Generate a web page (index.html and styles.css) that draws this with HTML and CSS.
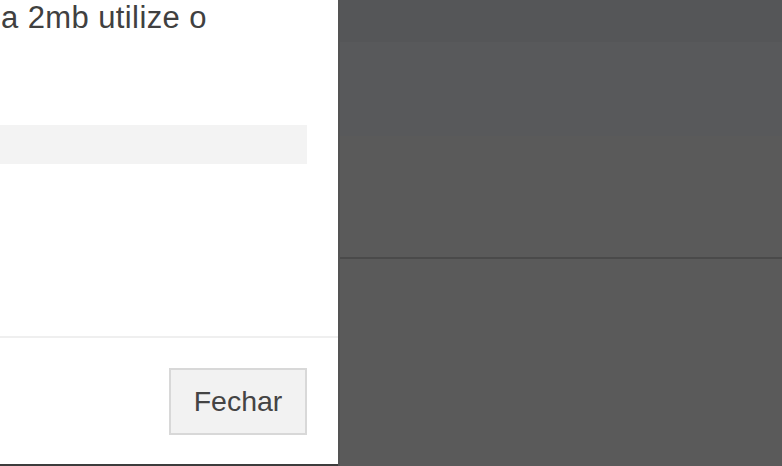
FILE: index.html
```html
<!DOCTYPE html>
<html>
<head>
<meta charset="utf-8">
<link rel="stylesheet" href="styles.css">
</head>
<body>
<div class="page">
  <div class="modal">
    <div class="modal-body">
      <p class="msg">a 2mb utilize o</p>
      <div class="field"></div>
    </div>
    <div class="modal-footer">
      <button class="btn">Fechar</button>
    </div>
  </div>
  <div class="overlay">
    <div class="band band-top"></div>
    <div class="band band-mid"></div>
    <div class="band band-low"></div>
    <div class="band band-bottom"></div>
  </div>
</div>
</body>
</html>
```

FILE: styles.css
```css
html, body {
  margin: 0;
  padding: 0;
  height: 100%;
  overflow: hidden;
}
body {
  font-family: "Liberation Sans", Arial, sans-serif;
}
.page {
  display: flex;
  height: 466px;
}
.modal {
  width: 338px;
  flex: none;
  height: 464px;
  background: #fff;
  border-bottom: 2px solid #3c3c3c;
  display: flex;
  flex-direction: column;
}
.modal-body {
  flex: 1;
  padding: 0 31px 0 0;
}
.msg {
  margin: 0;
  padding: 0 0 0 1px;
  font-size: 31px;
  letter-spacing: 0.4px;
  line-height: 36px;
  color: #404040;
}
.field {
  margin-top: 89px;
  height: 39px;
  background: #f3f3f3;
}
.modal-footer {
  height: 128px;
  border-top: 2px solid #efefef;
  display: flex;
  justify-content: flex-end;
  align-items: flex-start;
  padding: 30px 31px 0 0;
  box-sizing: border-box;
}
.btn {
  width: 138px;
  height: 67px;
  background: #f2f2f2;
  border: 2px solid #d8d8d8;
  font-family: "Liberation Sans", Arial, sans-serif;
  font-size: 28.5px;
  color: #444;
  padding: 0;
}
.overlay {
  flex: 1;
  display: flex;
  flex-direction: column;
  background: #5a5a5a;
  border-left: 2px solid #545454;
}
.band-top {
  height: 42px;
  background: #555658;
}
.band-mid {
  height: 94px;
  background: #58595b;
}
.band-low {
  height: 121px;
  background: #5a5a5a;
  border-bottom: 2px solid #4a4a4a;
}
.band-bottom {
  flex: 1;
  background: #5a5a5a;
}
```
